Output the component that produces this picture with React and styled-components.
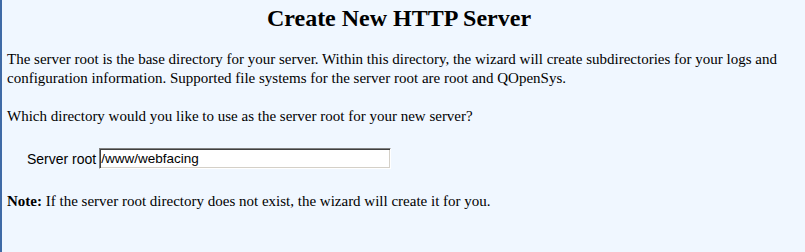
import React from "react";
import styled, { createGlobalStyle } from "styled-components";

const GlobalStyle = createGlobalStyle`
  html, body {
    margin: 0;
    padding: 0;
    background: #f0f7ff;
  }
`;

const Page = styled.div`
  box-sizing: border-box;
  height: 252px;
  border-left: 2px solid #3f6aa6;
  padding: 0 14px 0 5px;
  font-family: "Liberation Serif", "Times New Roman", serif;
  font-size: 15px;
  color: #000;
`;

const Title = styled.h2`
  margin: 0;
  padding-top: 5px;
  text-align: center;
  font-size: 24px;
  line-height: 26px;
  font-weight: bold;
`;

const Paragraph = styled.p`
  margin: ${(p) => p.$top || 0}px 0 0;
  line-height: 19px;
`;

const FieldRow = styled.div`
  display: flex;
  align-items: center;
  gap: 3px;
  margin-top: 22px;
  padding-left: 20px;
`;

const Label = styled.label`
  font-family: "Liberation Sans", Arial, sans-serif;
  font-size: 14px;
`;

const TextInput = styled.input`
  box-sizing: border-box;
  width: 292px;
  height: 21px;
  margin: 0;
  padding: 0 1px;
  font-family: "Liberation Sans", Arial, sans-serif;
  font-size: 13.5px;
  color: #000;
  background: #fff;
  border: 1px solid;
  border-color: #808080 #ffffff #ffffff #808080;
  box-shadow: inset 1px 1px #404040, inset -1px -1px #d4d0c8;
  outline: none;
`;

export default function App() {
  return (
    <>
      <GlobalStyle />
      <Page>
        <Title>Create New HTTP Server</Title>
        <Paragraph $top={19}>
          The server root is the base directory for your server. Within this
          directory, the wizard will create subdirectories for your logs and
          configuration information. Supported file systems for the server root
          are root and QOpenSys.
        </Paragraph>
        <Paragraph $top={19}>
          Which directory would you like to use as the server root for your new
          server?
        </Paragraph>
        <FieldRow>
          <Label htmlFor="root">Server root</Label>
          <TextInput id="root" defaultValue="/www/webfacing" />
        </FieldRow>
        <Paragraph $top={23}>
          <b>Note:</b> If the server root directory does not exist, the wizard
          will create it for you.
        </Paragraph>
      </Page>
    </>
  );
}
